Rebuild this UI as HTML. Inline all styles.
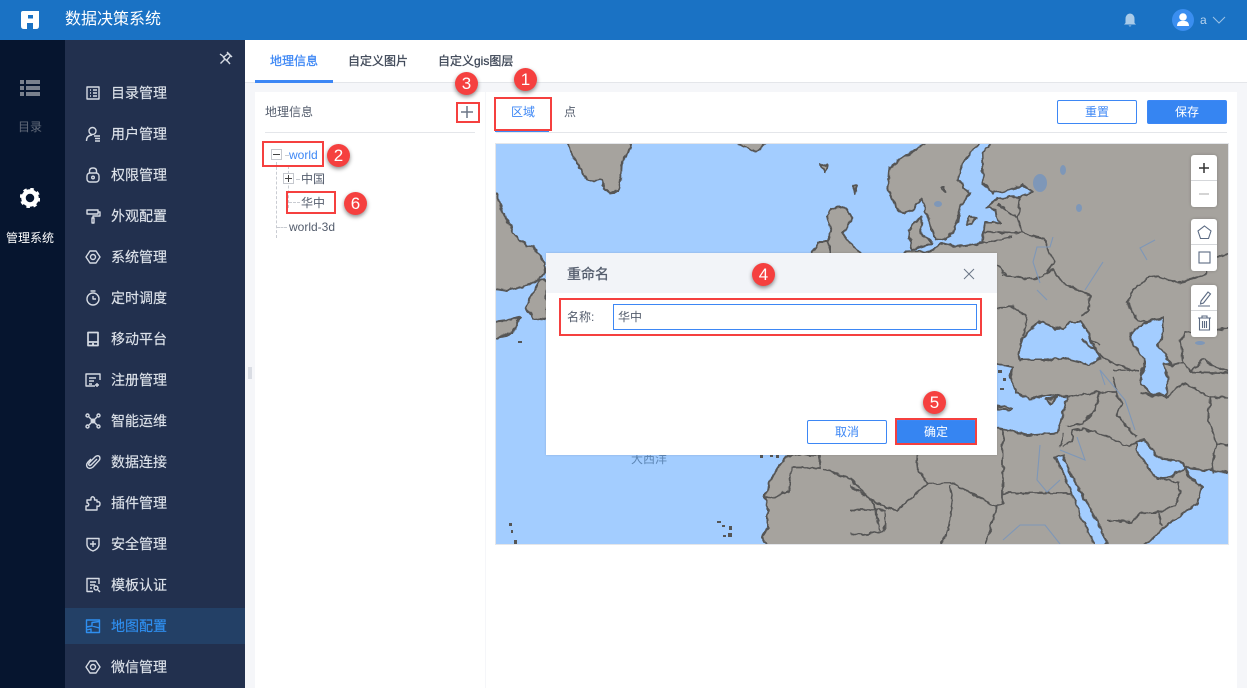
<!DOCTYPE html>
<html><head><meta charset="utf-8"><style>
html,body{margin:0;padding:0;width:1247px;height:688px;overflow:hidden;background:#f5f6f9;font-family:"Liberation Sans","Noto Sans CJK SC",sans-serif;font-size:12px}
.a{position:absolute;white-space:nowrap}
.m{position:absolute;left:111px;font-size:14px;line-height:20px;color:#dde2ea;-webkit-text-stroke:.15px #dde2ea}
.i{position:absolute;left:85px;width:16px;height:16px;fill:none;stroke:#d5dae3;stroke-width:1.4;stroke-linejoin:round}
.r{position:absolute;border:2px solid #f5403f;box-sizing:border-box}
.c{position:absolute;width:23px;height:23px;border-radius:50%;background:#f5403f;color:#fff;font-size:17px;line-height:23px;text-align:center;box-shadow:0 2px 4px rgba(0,0,0,.45)}
.b{position:absolute;box-sizing:border-box;width:80px;height:24px;border:1px solid #3d87f5;border-radius:2px;color:#3d87f5;background:#fff;text-align:center;line-height:22px;font-size:12px}
.f{background:#3685f2;color:#fff}
.t{position:absolute;left:1191px;width:26px;height:52px;background:#fff;border-radius:3px;box-shadow:0 0 3px rgba(0,0,0,.2)}
.t:after{content:"";position:absolute;left:0;right:0;top:25px;height:1px;background:#d5d7da}
.tr{position:absolute;border-left:1px dashed #c9ccd2}
.th{position:absolute;border-top:1px dashed #c9ccd2}
.tab{-webkit-text-stroke:.3px currentColor}
</style></head><body>
<div class="a" style="left:0;top:0;width:1247px;height:40px;background:#1a72c4"></div>
<svg class="a" style="left:20px;top:10px" width="20" height="20" viewBox="0 0 20 20"><path d="M1 3Q1 1 3 1H19V16Q19 19 16 19H13V13H7V19H4Q1 19 1 16ZM8 5V8.500H13V5Z" fill="#fff"/></svg>
<div class="a" style="left:65px;top:9px;font-size:16px;line-height:22px;color:#fff">数据决策系统</div>
<svg class="a" style="left:1122px;top:12px" width="16" height="16" viewBox="0 0 16 16"><path d="M8 1.500Q12.500 2 12.500 7V11L14 12.500H2L3.500 11V7Q3.500 2 8 1.500ZM6.500 13.500H9.500Q8 15.500 6.500 13.500Z" fill="#a9cbe9"/></svg>
<div class="a" style="left:1172px;top:9px;width:22px;height:22px;border-radius:50%;background:#3a8ef0"></div>
<svg class="a" style="left:1172px;top:9px" width="22" height="22" viewBox="0 0 22 22"><circle cx="11" cy="8" r="3.800" fill="#fff"/><path d="M5 17Q5 12.500 9 12H13Q17 12.500 17 17Z" fill="#fff"/></svg>
<div class="a" style="left:1200px;top:12px;font-size:12px;line-height:16px;color:#b7d3ee">a</div>
<svg class="a" style="left:1212px;top:15px" width="14" height="10" viewBox="0 0 14 10"><path d="M1 2L7 8L13 2" fill="none" stroke="#9dc3e6" stroke-width="1"/></svg>

<div class="a" style="left:0;top:40px;width:65px;height:648px;background:#06152f"></div>
<svg class="a" style="left:20px;top:80px" width="20" height="16" viewBox="0 0 20 16"><path d="M0 0H4V4H0ZM6 0H20V4H6ZM0 6H4V10H0ZM6 6H20V10H6ZM0 12H4V16H0ZM6 12H20V16H6Z" fill="#79808d"/></svg>
<div class="a" style="left:18px;top:119px;font-size:12px;line-height:16px;color:#626a79">目录</div>
<svg class="a" style="left:20px;top:188px" width="20" height="20" viewBox="0 0 20 20"><circle cx="10" cy="10" r="6.500" fill="none" stroke="#fff" stroke-width="4.500"/><circle cx="10" cy="10" r="9" fill="none" stroke="#fff" stroke-width="2.500" stroke-dasharray="3.500 3.570"/></svg>
<div class="a" style="left:6px;top:230px;font-size:12px;line-height:16px;color:#fff">管理系统</div>

<div class="a" style="left:65px;top:40px;width:180px;height:648px;background:#22304e"></div>
<div class="a" style="left:65px;top:608px;width:180px;height:36px;background:#234066"></div>
<svg class="a" style="left:219px;top:51px" width="14" height="14" viewBox="0 0 14 14"><path d="M8 1L13 6M9 2.500L11.500 5L7.500 9.500L4.500 6.500ZM5 6L1 3M8 9.500L11 13M5.500 8.500L1.500 12.500" fill="none" stroke="#d5dae3" stroke-width="1.400"/></svg>

<svg class="i" style="top:85px" viewBox="0 0 16 16"><path d="M2 2H14V14H2ZM5 5H6M8 5H12M5 8H6M8 8H12M5 11H6M8 11H12"/></svg><div class="m" style="top:83px">目录管理</div>
<svg class="i" style="top:126px" viewBox="0 0 16 16"><circle cx="7.500" cy="5" r="3.500"/><path d="M1.500 15Q1.500 9.500 7 9M9 10H15M10 12.500H15M10 15H15"/></svg><div class="m" style="top:124px">用户管理</div>
<svg class="i" style="top:167px" viewBox="0 0 16 16"><rect x="2" y="6" width="12" height="9" rx="3"/><path d="M4.500 6V4Q4.500 1 8 1Q11.500 1 11.500 4V6"/><circle cx="8" cy="10.500" r="1.300"/></svg><div class="m" style="top:165px">权限管理</div>
<svg class="i" style="top:208px" viewBox="0 0 16 16"><path d="M2 2H13V6H2ZM13 4H15V8H8V10M7 10H9V15H7Z"/></svg><div class="m" style="top:206px">外观配置</div>
<svg class="i" style="top:249px" viewBox="0 0 16 16"><path d="M5 2H11L15 8L11 14H5L1 8Z"/><circle cx="8" cy="8" r="2.500"/></svg><div class="m" style="top:247px">系统管理</div>
<svg class="i" style="top:290px" viewBox="0 0 16 16"><circle cx="8" cy="9" r="6"/><path d="M5.500 1H10.500M8 6V9H11"/></svg><div class="m" style="top:288px">定时调度</div>
<svg class="i" style="top:331px" viewBox="0 0 16 16"><path d="M3 1.500H13V14.500H3ZM3 11H13M7 13H9" stroke-width="1.700"/></svg><div class="m" style="top:329px">移动平台</div>
<svg class="i" style="top:372px" viewBox="0 0 16 16"><path d="M15 8V2H1V14H10M4 6H11M4 9H9M4 12H7M12 11V15M10 13H14"/></svg><div class="m" style="top:370px">注册管理</div>
<svg class="i" style="top:413px" viewBox="0 0 16 16"><circle cx="2.500" cy="2.500" r="1.500"/><circle cx="13.500" cy="2.500" r="1.500"/><circle cx="2.500" cy="13.500" r="1.500"/><circle cx="13.500" cy="13.500" r="1.500"/><circle cx="8" cy="8" r="1.800"/><path d="M4 4L12 12M12 4L4 12"/></svg><div class="m" style="top:411px">智能运维</div>
<svg class="i" style="top:454px" viewBox="0 0 16 16"><path d="M12 5L6 11Q4.500 12 4 11Q3 10 5 8L10.500 2.500Q13 1 14.500 2.500Q15.500 5 14 6.500L8 13Q5 15.500 2.500 13.500Q0.500 11 3 8L6 5"/></svg><div class="m" style="top:452px">数据连接</div>
<svg class="i" style="top:495px" viewBox="0 0 16 16"><path d="M1 15V11H3Q4.500 9.500 3 8H2V5H6V3Q7.500 0.500 9.500 3V5H12V7Q15 6 15 9Q15 12 12 11V15Z"/></svg><div class="m" style="top:493px">插件管理</div>
<svg class="i" style="top:536px" viewBox="0 0 16 16"><path d="M2 2.500H14V9Q13.500 13 8 15Q2.500 13 2 9ZM8 5V11M5 8H11"/></svg><div class="m" style="top:534px">安全管理</div>
<svg class="i" style="top:577px" viewBox="0 0 16 16"><path d="M14 7V1.500H2V14.500H8M5 5H11M5 8H10M5 11H7"/><circle cx="11" cy="11" r="2"/><path d="M13 13L15 15"/></svg><div class="m" style="top:575px">模板认证</div>
<svg class="i" style="top:618px;stroke:#2f8ff0" viewBox="0 0 16 16"><path d="M1.500 2H14.500V14.500H1.500ZM1.500 9L7 8V4.500L14.500 3.500M7 8L14.500 10M6 14.500V11L1.500 12"/></svg><div class="m" style="top:616px;color:#2f8ff0;-webkit-text-stroke:.15px #2f8ff0">地图配置</div>
<svg class="i" style="top:659px" viewBox="0 0 16 16"><path d="M5 2H11L15 8L11 14H5L1 8Z"/><circle cx="8" cy="8" r="2.500"/></svg><div class="m" style="top:657px">微信管理</div>

<div class="a" style="left:248px;top:367px;width:4px;height:12px;background-image:radial-gradient(#8a92a3 45%,transparent 50%);background-size:2px 2px"></div>

<div class="a" style="left:245px;top:40px;width:1002px;height:42px;background:#fff;border-bottom:1px solid #e4e6ea;box-sizing:content-box"></div>
<div class="a" style="left:255px;top:80px;width:78px;height:3px;background:#3d87f5"></div>
<div class="a tab" style="left:270px;top:53px;line-height:16px;color:#3d87f5">地理信息</div>
<div class="a tab" style="left:348px;top:53px;line-height:16px;color:#3f4858">自定义图片</div>
<div class="a tab" style="left:438px;top:53px;line-height:16px;color:#3f4858">自定义gis图层</div>

<div class="a" style="left:255px;top:92px;width:230px;height:596px;background:#fff"></div>
<div class="a" style="left:486px;top:92px;width:751px;height:596px;background:#fff"></div>
<div class="a" style="left:265px;top:104px;line-height:16px;color:#545d6d">地理信息</div>
<div class="a" style="left:265px;top:132px;width:210px;height:1px;background:#e4e6ea"></div>
<svg class="a" style="left:460px;top:105px" width="14" height="14" viewBox="0 0 14 14"><path d="M1 7H13M7 1V13" stroke="#6c7687" stroke-width="1.500" fill="none"/></svg>

<div class="tr" style="left:276px;top:162px;height:76px"></div>
<div class="tr" style="left:288px;top:166px;height:42px"></div>
<div class="th" style="left:285px;top:155px;width:4px"></div>
<div class="a" style="left:271px;top:149px;width:11px;height:11px;border:1px solid #c5c8ce;box-sizing:border-box;background:#fff"></div>
<div class="a" style="left:273px;top:154px;width:7px;height:1px;background:#444"></div>
<div class="a" style="left:289px;top:147px;line-height:16px;color:#3d87f5">world</div>
<div class="a" style="left:283px;top:173px;width:11px;height:11px;border:1px solid #c5c8ce;box-sizing:border-box;background:#fff"></div>
<div class="a" style="left:285px;top:178px;width:7px;height:1px;background:#444"></div>
<div class="a" style="left:288px;top:175px;width:1px;height:7px;background:#444"></div>
<div class="th" style="left:296px;top:179px;width:4px"></div>
<div class="a" style="left:301px;top:171px;line-height:16px;color:#545d6d">中国</div>
<div class="th" style="left:289px;top:202px;width:11px"></div>
<div class="a" style="left:301px;top:195px;line-height:16px;color:#545d6d">华中</div>
<div class="th" style="left:277px;top:227px;width:10px"></div>
<div class="a" style="left:289px;top:219px;line-height:16px;color:#545d6d">world-3d</div>

<div class="a" style="left:511px;top:104px;line-height:16px;color:#3d87f5">区域</div>
<div class="a" style="left:564px;top:104px;line-height:16px;color:#545d6d">点</div>
<div class="a" style="left:495px;top:130px;width:54px;height:2px;background:#3d87f5"></div>
<div class="a" style="left:496px;top:132px;width:731px;height:1px;background:#e4e6ea"></div>
<div class="b" style="left:1057px;top:100px">重置</div>
<div class="b f" style="left:1147px;top:100px">保存</div>

<svg class="a" style="left:495px;top:143px" width="734" height="402" viewBox="495 143 734 402">
<defs><filter id="rough" x="-2%" y="-2%" width="104%" height="104%" color-interpolation-filters="sRGB"><feTurbulence type="fractalNoise" baseFrequency="0.14" numOctaves="2" seed="4"/><feDisplacementMap in="SourceGraphic" scale="5" xChannelSelector="R" yChannelSelector="G"/></filter></defs>
<rect x="495" y="143" width="734" height="402" fill="#e4e6ea"/>
<svg x="496" y="144" width="732" height="400" viewBox="496 144 732 400">
<rect x="496" y="144" width="732" height="400" fill="#a3cdff"/>
<g filter="url(#rough)">
<g fill="#a6a39e" stroke="#555" stroke-width="2" stroke-linejoin="round">
<path d="M568 140L570 152L575 160L580 168L587 180L594 181L600 180L604 188L610 193L617 192L619 185L621 175L622 162L628 153L632 140Z"/>
<path d="M732 140L745 147L757 152L768 140Z"/>
<path d="M490 193H496L500 205L507 220L513 232L520 240L527 246L533 247L540 255L545 263L545 272L538 280L523 287L507 291L490 288Z"/>
<path d="M525 307L532 294L540 280L546 279L547 320L533 318Z"/>
<path d="M490 322L510 320L520 317L516 325L513 332L505 336L490 339Z"/>
<path d="M827 217L833 208L845 207L852 218L848 226L843 233L850 243L853 247L862 253V262H827V243L831 232Z"/>
<path d="M812 253L818 242L827 242L830 245V262H812Z"/>
<path d="M890 167L888 187L895 208L903 213L913 210L922 198L928 218L935 240L945 238L953 233L957 222L960 208L970 193L958 180L962 163L982 140H930L907 155Z"/>
<path d="M908 230L915 222L922 217L920 233L933 243L922 247L912 250Z"/>
<path d="M993 140L982 153L983 183L993 193L1008 190L1023 185L1033 192L1020 197L997 198L987 208L996 210L997 218L1000 224L992 222L985 222L982 243L960 247L943 243L930 251L905 252L880 300L800 440L787 455L777 468L767 488L765 498L768 510L768 527L762 537L768 550H1235V140Z"/>
<path d="M1018 353L1023 337L1040 321L1053 327L1063 330L1070 322L1080 322L1087 330L1090 340L1100 357L1090 365L1063 358L1047 360L1032 360L1020 360Z" fill="#a3cdff"/>
<path d="M1130 340L1130 333L1147 322L1163 318L1163 333L1158 345L1165 355L1172 365L1163 363L1168 377L1167 395L1150 393L1140 383L1145 360Z" fill="#a3cdff"/>
<path d="M990 363L1013 367L1010 380L1017 393L1030 399L1050 395L1068 397L1063 413L1057 433L1027 435L1003 429L990 427Z" fill="#a3cdff"/>
<path d="M1055 457L1063 455L1072 477L1083 497L1098 523L1107 543L1097 550L1083 520L1073 497L1067 480Z" fill="#a3cdff"/>
<path d="M1137 442L1145 440L1157 457L1183 462L1185 468L1178 472L1170 477L1157 478L1148 468L1137 452Z" fill="#a3cdff"/>
<path d="M1235 473L1185 468L1190 477L1202 487L1197 503L1167 525L1140 550H1235Z" fill="#a3cdff"/>
<path d="M1046 400L1058 396L1050 404Z"/>
<path d="M997 406L1013 408L1010 410L997 409Z"/>
<path d="M977 218L972 224L966 226L970 217Z"/>
<path d="M820 165L827 164L825 172ZM853 186L857 185L855 194ZM942 188L945 187L945 192Z"/>
</g>
<g fill="none" stroke="#555" stroke-width="1.800" stroke-linejoin="round">
<path d="M1003 430V503L997 505M1003 493H1072M997 505L988 537L983 550M950 485L953 503L948 530L938 550M850 485L867 497L885 507L897 510L928 483L953 483L997 507M918 455L917 468L928 483M850 510H885L885 530L863 535L850 533M787 455H820V468H792L788 492L780 495L765 498M823 468L852 480L875 505L880 530"/>
<path d="M1068 397L1100 392L1117 392L1113 377L1117 393L1122 403L1117 415L1137 437M1100 392L1095 410L1083 423L1067 427M1083 428L1110 437L1128 447L1137 442M1063 447L1073 440L1072 430L1083 428M1060 447L1063 433M1107 520L1132 522L1140 513L1160 512L1175 505L1180 493L1178 482L1158 478M1158 512L1163 525M1140 393L1167 397L1183 383L1210 397L1208 420L1217 443L1212 465L1213 473M1210 397L1235 398M1217 443L1235 447M1172 365L1183 362L1190 372L1235 373M1183 362L1180 340M1190 372L1203 360L1215 367L1235 373M1083 340L1110 362L1140 372M1113 370L1130 370M1090 340L1100 345"/>
<path d="M997 204L1017 218M1020 197L1018 218L1022 233L1035 236L1047 240L1047 250L1055 260L1047 273M983 232L1013 233L1022 233M982 243L1012 237M1003 275L1035 279L1053 270L1063 283L1090 295L1089 310L1080 317M997 265L1007 275M997 308L1013 307L1027 317L1023 335M1235 252L1205 260L1207 273L1180 283L1150 275L1133 290L1127 303L1137 320L1147 322M1235 327L1185 333L1180 340"/>
</g>
</g>
<g fill="none" stroke="#7e97b8" stroke-width="1.100">
<path d="M1053 237L1050 247L1037 247L1033 262L1040 283M1037 290L1047 300M1103 262L1085 290M1155 240L1140 248L1147 260M1077 437L1085 460L1060 450M1040 445L1037 480L1047 492L1060 480M1105 385L1100 370L1125 400L1135 430M1215 300L1205 320M1003 540L1020 525L1045 525L1060 544"/>
</g>
<g fill="#7e97b8"><ellipse cx="1040" cy="183" rx="7" ry="9"/><ellipse cx="1063" cy="170" rx="3" ry="5"/><ellipse cx="938" cy="204" rx="4" ry="3"/><ellipse cx="1079" cy="208" rx="3" ry="4"/><ellipse cx="1200" cy="343" rx="5" ry="2"/></g>
<g fill="#555"><rect x="518" y="341" width="4" height="2"/><rect x="717" y="521" width="4" height="2"/><rect x="722" y="525" width="3" height="2"/><rect x="729" y="526" width="3" height="4"/><rect x="728" y="533" width="4" height="4"/><rect x="723" y="535" width="3" height="2"/><rect x="509" y="523" width="3" height="3"/><rect x="511" y="530" width="2" height="3"/><rect x="514" y="540" width="3" height="4"/><rect x="760" y="455" width="3" height="3"/><rect x="770" y="455" width="3" height="2"/><rect x="776" y="455" width="3" height="3"/><rect x="998" y="370" width="4" height="3"/><rect x="1003" y="378" width="3" height="3"/><rect x="1000" y="388" width="4" height="2"/></g>
<text x="631" y="463" font-size="12" fill="#5d86b5" font-family="Liberation Sans,Noto Sans CJK SC,sans-serif">大西洋</text>
</svg>
</svg>

<div class="t" style="top:155px"></div>
<svg class="a" style="left:1191px;top:155px" width="26" height="52" viewBox="0 0 26 52"><path d="M8 13H18M13 8V18" stroke="#333" stroke-width="1.500"/><path d="M8 39H18" stroke="#c5c5c5" stroke-width="1.500"/></svg>
<div class="t" style="top:219px"></div>
<svg class="a" style="left:1191px;top:219px" width="26" height="52" viewBox="0 0 26 52" fill="none" stroke="#5b6a82" stroke-width="1.100"><path d="M13.500 7L20 12L17.500 19.500H9.500L7 12Z"/><rect x="8" y="33" width="11" height="11"/></svg>
<div class="t" style="top:285px"></div>
<svg class="a" style="left:1191px;top:285px" width="26" height="52" viewBox="0 0 26 52" fill="none" stroke="#5b6a82" stroke-width="1.100"><path d="M10 16L17 7L19.500 9L12.500 18L9.500 19ZM7 21H19"/><path d="M7 33H20M11 33V31H16V33M8.500 33V45H18.500V33M11.500 36V43M13.500 36V43M15.500 36V43"/></svg>

<div class="a" style="left:546px;top:253px;width:451px;height:202px;background:#fff;box-shadow:0 0 2px rgba(0,0,0,.15)"></div>
<div class="a" style="left:546px;top:253px;width:451px;height:40px;background:#f2f4f8"></div>
<div class="a tab" style="left:567px;top:265px;font-size:14px;line-height:18px;color:#545d6d">重命名</div>
<svg class="a" style="left:963px;top:268px" width="12" height="12" viewBox="0 0 12 12"><path d="M1 1L11 11M11 1L1 11" stroke="#6c7687" stroke-width="1" fill="none"/></svg>
<div class="a" style="left:567px;top:309px;line-height:16px;color:#545d6d">名称:</div>
<div class="a" style="left:613px;top:304px;width:364px;height:26px;box-sizing:border-box;border:1px solid #3d87f5;line-height:24px;padding-left:4px;color:#545d6d">华中</div>
<div class="b" style="left:807px;top:420px">取消</div>
<div class="b f" style="left:896px;top:420px">确定</div>

<div class="r" style="left:494px;top:97px;width:58px;height:34px"></div>
<div class="r" style="left:456px;top:102px;width:24px;height:21px"></div>
<div class="r" style="left:262px;top:141px;width:62px;height:26px"></div>
<div class="r" style="left:286px;top:191px;width:50px;height:23px"></div>
<div class="r" style="left:559px;top:298px;width:423px;height:38px"></div>
<div class="r" style="left:895px;top:418px;width:82px;height:27px"></div>
<div class="c" style="left:514px;top:68px">1</div>
<div class="c" style="left:327px;top:144px">2</div>
<div class="c" style="left:455px;top:72px">3</div>
<div class="c" style="left:752px;top:263px">4</div>
<div class="c" style="left:923px;top:391px">5</div>
<div class="c" style="left:344px;top:192px">6</div>
</body></html>
